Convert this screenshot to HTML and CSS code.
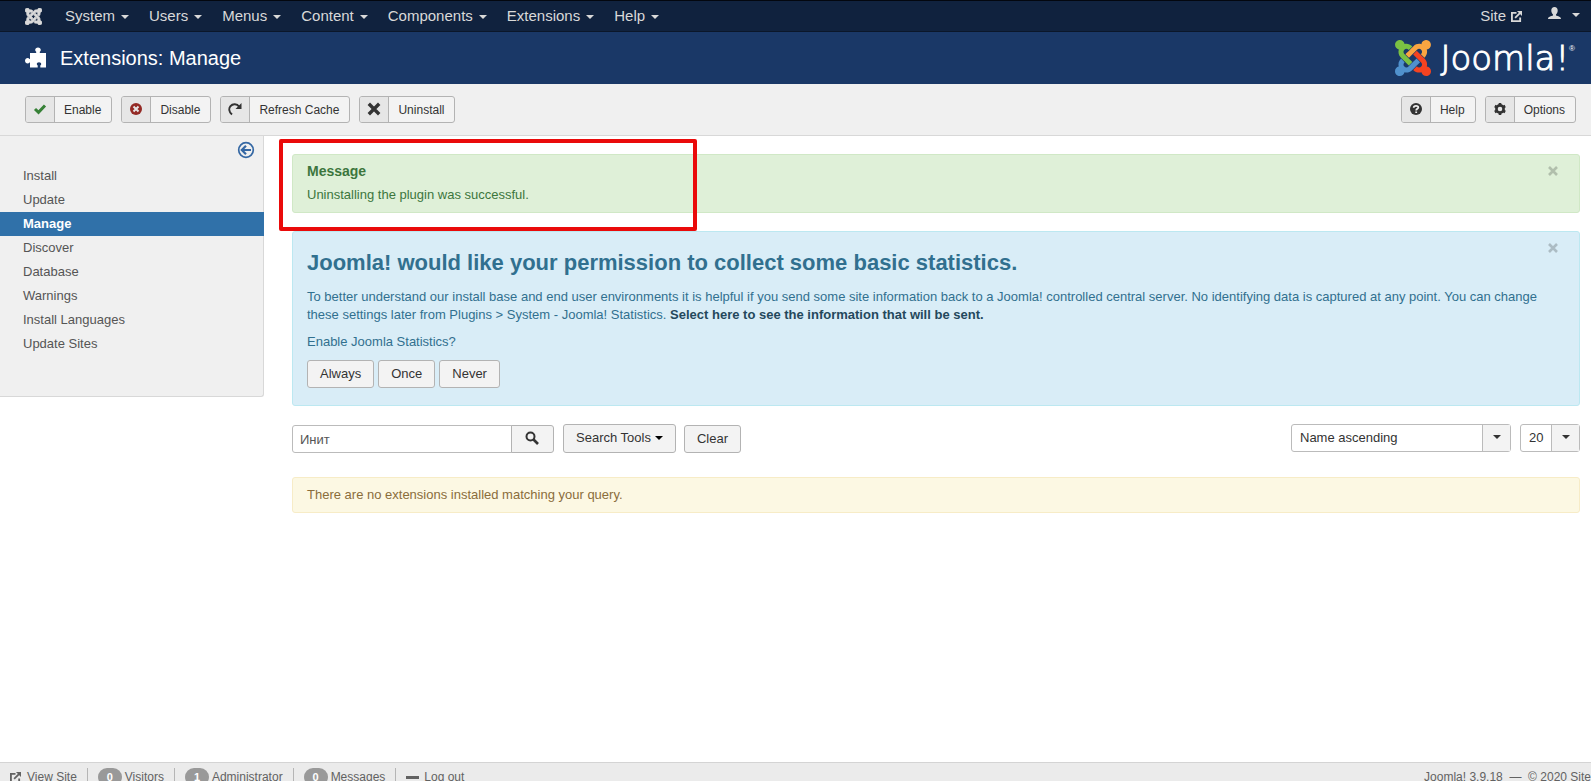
FILE: index.html
```html
<!DOCTYPE html>
<html lang="en">
<head>
    <meta charset="UTF-8">
    <meta name="viewport" content="width=device-width, initial-scale=1.0">
    <title>Extensions: Manage</title>
    <link rel="stylesheet" href="styles.css">
</head>
<body>
    <!-- Top menu -->
    <nav class="navbar">
        <a class="brand" href="#" aria-label="Control Panel">
            <svg width="17" height="17" viewBox="0 32 448 448"><use href="#joomla-mark"/></svg>
        </a>
        <ul class="menu">
            <li><a href="#">System<span class="caret"></span></a></li>
            <li><a href="#">Users<span class="caret"></span></a></li>
            <li><a href="#">Menus<span class="caret"></span></a></li>
            <li><a href="#">Content<span class="caret"></span></a></li>
            <li><a href="#">Components<span class="caret"></span></a></li>
            <li><a href="#">Extensions<span class="caret"></span></a></li>
            <li><a href="#">Help<span class="caret"></span></a></li>
        </ul>
        <ul class="menu menu-right">
            <li><a href="#">Site<svg class="icon-site" width="11" height="11" viewBox="0 0 12 12"><use href="#icon-out"/></svg></a></li>
            <li><a href="#" aria-label="User menu"><svg width="13" height="13" viewBox="0 0 13 13"><path fill="currentColor" d="M6.500 0C8.500 0 9.700 1.400 9.700 3.500C9.700 5.200 9 6.600 8 7.400V8.400C10 9 13 9.600 13 12H0C0 9.600 3 9 5 8.400V7.400C4 6.600 3.300 5.200 3.300 3.500C3.300 1.400 4.500 0 6.500 0Z"/></svg><span class="caret caret-user"></span></a></li>
        </ul>
    </nav>

    <header class="header">
        <h1 class="page-title">
            <svg width="22" height="22" viewBox="0 0 22 22"><path fill="#fff" d="M5 6H11.200V4.800C10.500 4.300 10.200 3.700 10.200 3C10.200 1.400 11.400 .4 13 .4S15.800 1.400 15.800 3C15.800 3.700 15.500 4.300 14.800 4.800V6H21V20.500H15.300V18.500C16 18 16.200 17.500 16.200 17C16.200 15.900 15.300 15.200 14 15.200S11.800 15.900 11.800 17C11.800 17.500 12 18 12.700 18.500V20.500H5V15.500H4.500C4 16.100 3.400 16.400 2.700 16.400C1.200 16.400 0 15.200 0 13.700S1.200 11 2.700 11C3.400 11 4 11.300 4.500 12H5Z"/></svg>
            Extensions: Manage
        </h1>
        <div class="logo">
            <svg width="36" height="36" viewBox="0 32 448 448">
                <defs>
                    <g id="joomla-mark">
                        <path id="mark-tl" d="M.6 92.100C.6 58.800 27.400 32 60.400 32c30 0 54.500 21.900 59.200 50.200 32.600-7.600 67.100.6 96.500 30l-44.300 44.300c-20.500-20.500-42.600-16.300-55.400-3.500-14.300 14.300-14.300 37.900 0 52.200l99.500 99.500-44 44.300c-87.700-87.200-49.700-49.700-99.800-99.700-26.800-26.500-35-64.800-24.800-98.900C20.400 144.600.6 120.700.6 92.100z"/>
                        <path id="mark-tr" d="M130.100 208.500l44.300 44.300c10-10 89.700-89.700 99.700-99.800 14.300-14.300 37.600-14.300 51.900 0 12.800 12.800 17 35-3.500 55.400l44 44.300c31.200-31.200 38.500-67.600 28.900-101.200 29.200-4.100 51.900-29.200 51.900-59.500 0-33.200-26.800-60.100-59.800-60.100-30.300 0-55.400 22.500-59.500 51.600-33.800-9.900-71.700-1.500-98.300 25.100-18.300 19.100-71.100 71.500-99.600 99.900z"/>
                        <path id="mark-br" d="M396.400 360.700c8.200-32.700-.9-68.500-26.300-93.900-11.800-12.200 5 4.700-99.500-99.700l-44.300 44.300 99.700 99.700c14.300 14.300 14.300 37.600 0 51.900-12.800 12.800-35 17-55.400-3.500l-44 44.300c27.600 30.200 68 38.800 102.700 28 5.500 27.400 29.700 48.100 58.900 48.100 33 0 59.800-26.800 59.800-60.100 0-30.200-22.500-55-51.600-59.100z"/>
                        <path id="mark-bl" d="M312.100 307.600l-44-44.300c-87 86.400-50.400 50.400-99.700 99.800-14.300 14.300-37.600 14.300-51.900 0-13.100-13.400-16.900-35.300 3.200-55.400l-44-44.300c-30.200 30.200-38 65.200-29.500 98.300-26.700 6-46.200 29.900-46.200 58.200C0 453.200 26.800 480 59.800 480c28.600 0 52.500-19.800 58.600-46.700 32.700 8.200 68.500-.6 94.200-26 32.100-32 12.200-12.400 99.500-99.700z"/>
                    </g>
                    <g id="icon-out" fill="none" stroke="currentColor">
                        <path stroke-width="2" d="M6 2H1V11H10V7"/>
                        <path stroke-width="2" d="M4.500 7.500L10 2"/>
                        <path fill="currentColor" stroke="none" d="M6.500 0H12V5.500Z"/>
                    </g>
                </defs>
                <use href="#mark-tl" fill="#7ac143"/>
                <use href="#mark-tr" fill="#f9a541"/>
                <use href="#mark-br" fill="#f44321"/>
                <use href="#mark-bl" fill="#5091cd"/>
            </svg>
            <span class="logo-text">Joomla!</span><span class="logo-reg">®</span>
        </div>
    </header>

    <!-- Toolbar -->
    <div class="subhead">
        <button type="button" class="tool">
            <span class="tool-icon"><svg width="14" height="14" viewBox="0 0 14 14"><path fill="none" stroke="#378137" stroke-width="3" d="M2 7L5.500 10.300L12 3.500"/></svg></span>
            <span class="tool-label">Enable</span>
        </button>
        <button type="button" class="tool">
            <span class="tool-icon"><svg width="14" height="14" viewBox="0 0 14 14"><circle cx="7" cy="7" r="6" fill="#942a25"/><path stroke="#e6e6e6" stroke-width="2" d="M4.500 4.500L9.500 9.500M9.500 4.500L4.500 9.500"/></svg></span>
            <span class="tool-label">Disable</span>
        </button>
        <button type="button" class="tool">
            <span class="tool-icon"><svg width="14" height="14" viewBox="0 0 14 14"><path fill="none" stroke="#333" stroke-width="2" d="M4 12.500C1 10 .6 6.500 2.500 4.200C4.800 1.400 9 1.600 11.200 4.800"/><path fill="#333" d="M13.500 1V7H7.500Z"/></svg></span>
            <span class="tool-label">Refresh Cache</span>
        </button>
        <button type="button" class="tool">
            <span class="tool-icon"><svg width="14" height="14" viewBox="0 0 14 14"><path stroke="#333" stroke-width="3.400" d="M1.800 1.800L12.200 12.200M12.200 1.800L1.800 12.200"/></svg></span>
            <span class="tool-label">Uninstall</span>
        </button>
        <button type="button" class="tool tool-right">
            <span class="tool-icon"><svg width="14" height="14" viewBox="0 0 14 14"><circle cx="7" cy="7" r="6" fill="#333"/><path fill="none" stroke="#eee" stroke-width="1.800" d="M4.700 5.700C4.800 3.400 9.300 3.400 9.300 5.500C9.300 6.900 7.200 6.800 7.200 8.500M7.200 9.400V11"/></svg></span>
            <span class="tool-label">Help</span>
        </button>
        <button type="button" class="tool">
            <span class="tool-icon"><svg width="14" height="14" viewBox="0 0 14 14"><circle cx="7" cy="7" r="3.600" fill="none" stroke="#333" stroke-width="2.600"/><path fill="none" stroke="#333" stroke-width="2.600" d="M7 1V3M7 11V13M1.800 4L3.600 5M10.400 9L12.200 10M1.800 10L3.600 9M10.400 5L12.200 4"/></svg></span>
            <span class="tool-label">Options</span>
        </button>
    </div>

    <div class="container">
        <aside class="sidebar">
            <button type="button" class="sidebar-toggle" aria-label="Hide the sidebar">
                <svg width="18" height="18" viewBox="0 0 18 18"><circle cx="9" cy="9" r="7.300" fill="none" stroke="#3568a4" stroke-width="1.700"/><path fill="none" stroke="#3568a4" stroke-width="2.200" d="M14 9H5.500M9 4.800L4.800 9L9 13.200"/></svg>
            </button>
            <ul class="submenu">
                <li><a href="#">Install</a></li>
                <li><a href="#">Update</a></li>
                <li class="active"><a href="#">Manage</a></li>
                <li><a href="#">Discover</a></li>
                <li><a href="#">Database</a></li>
                <li><a href="#">Warnings</a></li>
                <li><a href="#">Install Languages</a></li>
                <li><a href="#">Update Sites</a></li>
            </ul>
        </aside>

        <main class="content">
            <div class="alert alert-success">
                <button type="button" class="close" aria-label="Close"><svg width="10" height="10" viewBox="0 0 10 10"><use href="#icon-close"/></svg></button>
                <h4>Message</h4>
                <p>Uninstalling the plugin was successful.</p>
                <div class="highlight"></div>
            </div>

            <div class="alert alert-info">
                <button type="button" class="close" aria-label="Close"><svg width="10" height="10" viewBox="0 0 10 10"><path id="icon-close" stroke="#000" stroke-width="2.600" d="M1 1L9 9M9 1L1 9"/></svg></button>
                <h2>Joomla! would like your permission to collect some basic statistics.</h2>
                <p>To better understand our install base and end user environments it is helpful if you send some site information back to a Joomla! controlled central server. No identifying data is captured at any point. You can change these settings later from Plugins &gt; System - Joomla! Statistics. <a href="#">Select here to see the information that will be sent.</a></p>
                <p>Enable Joomla Statistics?</p>
                <div class="stats-buttons">
                    <button type="button" class="btn">Always</button>
                    <button type="button" class="btn">Once</button>
                    <button type="button" class="btn">Never</button>
                </div>
            </div>

            <form class="filters">
                <div class="search">
                    <input type="text" name="search" value="Инит" aria-label="Search">
                    <button type="button" class="btn" aria-label="Search"><svg width="14" height="14" viewBox="0 0 14 14"><circle cx="5.500" cy="5.500" r="4" fill="none" stroke="#333" stroke-width="2"/><path stroke="#333" stroke-width="2.600" d="M8.500 8.500L13 13"/></svg></button>
                </div>
                <button type="button" class="btn btn-tools">Search Tools<span class="caret"></span></button>
                <button type="button" class="btn btn-clear">Clear</button>
                <div class="select select-order">
                    <select name="order" aria-label="Sort by">
                        <option>Name ascending</option>
                        <option>Name descending</option>
                    </select>
                    <span class="select-arrow"><span class="caret"></span></span>
                </div>
                <div class="select select-limit">
                    <select name="limit" aria-label="List limit">
                        <option>20</option>
                        <option>50</option>
                    </select>
                    <span class="select-arrow"><span class="caret"></span></span>
                </div>
            </form>

            <div class="alert alert-warning">There are no extensions installed matching your query.</div>
        </main>
    </div>

    <!-- Status bar -->
    <footer class="status">
        <a href="#"><svg width="11" height="11" viewBox="0 0 12 12"><use href="#icon-out"/></svg>View Site</a>
        <span class="item"><span class="badge">0</span>Visitors</span>
        <span class="item"><span class="badge">1</span>Administrator</span>
        <span class="item"><span class="badge">0</span>Messages</span>
        <a class="item" href="#"><span class="dash"></span>Log out</a>
        <span class="version">Joomla! 3.9.18 &nbsp;—&nbsp; © 2020 Site</span>
    </footer>
</body>
</html>
```
FILE: styles.css
```css
* {
    box-sizing: border-box;
}
body {
    display: flex;
    flex-direction: column;
    min-height: 100vh;
    margin: 0;
    background-color: #fff;
    color: #333;
    font-family: "Liberation Sans", Arial, sans-serif;
    font-size: 13px;
    line-height: 18px;
}
a {
    color: inherit;
    text-decoration: none;
}
button, input, select {
    font-family: inherit;
    font-size: 13px;
    line-height: 18px;
    color: #333;
}
button {
    cursor: pointer;
}
ul {
    list-style: none;
    margin: 0;
    padding: 0;
}
svg {
    display: block;
}
.caret {
    display: inline-block;
    border-top: 4px solid;
    border-left: 4px solid transparent;
    border-right: 4px solid transparent;
}

/* Top menu */
.navbar {
    display: flex;
    align-items: center;
    height: 32px;
    padding: 0 11px 0 25px;
    background: #10223e;
    border-top: 1px solid #03070f;
    border-bottom: 1px solid #0b172a;
    color: #d9d9d9;
    font-size: 15px;
}
.brand {
    margin-right: 13px;
    fill: #d9d9d9;
    stroke: #d9d9d9;
    stroke-width: 20px;
}
.menu {
    display: flex;
}
.menu a {
    display: flex;
    align-items: center;
    padding: 0 10px;
}
.menu .caret {
    margin: 2px 0 0 6px;
}
.menu-right {
    margin-left: auto;
}
.menu-right a {
    padding-right: 0;
}
.menu-right li + li a {
    padding-left: 26px;
}
.icon-site {
    margin-left: 5px;
}
.menu .caret-user {
    margin-left: 11px;
}

/* Title bar */
.header {
    display: flex;
    align-items: center;
    justify-content: space-between;
    height: 52px;
    padding: 0 16px 0 25px;
    background: #1a3867;
}
.page-title {
    display: flex;
    align-items: center;
    gap: 13px;
    margin: 0;
    color: #fff;
    font-size: 20px;
    font-weight: normal;
    line-height: 36px;
}
.logo {
    display: flex;
    align-items: center;
    color: #fff;
}
.logo-text {
    margin-left: 9px;
    font-family: "DejaVu Sans", sans-serif;
    font-size: 34px;
    font-weight: 200;
    line-height: 36px;
    -webkit-text-stroke: 1px #fff;
}
.logo-reg {
    align-self: flex-start;
    font-size: 8px;
}

/* Toolbar */
.subhead {
    display: flex;
    gap: 9px;
    padding: 12px 15px 12px 25px;
    background: #f0f0f0;
    border-bottom: 1px solid #d8d8d8;
}
.tool {
    display: flex;
    height: 27px;
    padding: 0;
    overflow: hidden;
    background: #f3f3f3;
    border: 1px solid #b3b3b3;
    border-radius: 3px;
    font-size: 12px;
}
.tool-icon {
    display: flex;
    align-items: center;
    justify-content: center;
    width: 29px;
    height: 25px;
    padding-bottom: 2px;
    background: #e6e6e6;
    border-right: 1px solid #b3b3b3;
}
.tool-label {
    padding: 0 10px 0 9px;
    line-height: 27px;
}
.tool-right {
    margin-left: auto;
}

/* Page body */
.container {
    display: flex;
    align-items: flex-start;
    flex: 1;
}
.sidebar {
    flex: none;
    width: 264px;
    padding: 5px 0 40px;
    background: #f0f0f0;
    border: solid #d8d8d8;
    border-width: 0 1px 1px 0;
    border-radius: 0 0 3px 0;
}
.sidebar-toggle {
    display: block;
    margin: 0 8px 5px auto;
    padding: 0;
    background: none;
    border: none;
}
.submenu a {
    display: block;
    padding: 3px 23px;
    color: #555;
}
.submenu .active a {
    margin-right: -1px;
    background: #3071a9;
    color: #fff;
    font-weight: bold;
}
.content {
    flex: 1;
    padding: 18px 11px 18px 28px;
}
.alert {
    position: relative;
    margin-bottom: 18px;
    padding: 8px 35px 8px 14px;
    border: 1px solid;
    border-radius: 3px;
}
.alert h2, .alert h4, .alert p {
    margin: 0;
}
.alert-success {
    padding-top: 7px;
    background: #dff0d8;
    border-color: #d0e8c6;
    color: #3c763d;
}
.alert-success h4 {
    margin-bottom: 6px;
    font-size: 14px;
    line-height: 18px;
}
.alert-info {
    padding-bottom: 17px;
    background: #d9edf7;
    border-color: #bce8f1;
    color: #31708f;
}
.alert-info h2 {
    margin: 5px 0 7px;
    font-size: 22px;
    line-height: 36px;
}
.alert-info p {
    margin-bottom: 9px;
}
.alert-info p a {
    color: #24485c;
    font-weight: bold;
}
.alert-warning {
    background: #fcf8e3;
    border-color: #f7ecc7;
    color: #8a6d3b;
}
.close {
    position: absolute;
    top: 11px;
    right: 21px;
    padding: 0;
    background: none;
    border: none;
    opacity: 0.2;
}
/* Frame drawn over the message */
.highlight {
    position: absolute;
    top: -16px;
    left: -14px;
    z-index: 1;
    width: 418px;
    height: 92px;
    border: 4px solid #ea0a0a;
    border-radius: 2px;
    pointer-events: none;
}
.btn {
    height: 28px;
    padding: 0 12px;
    background: #f3f3f3;
    border: 1px solid #b3b3b3;
    border-radius: 3px;
}
.stats-buttons {
    display: flex;
    gap: 4px;
}

/* Filters */
.filters {
    display: flex;
    align-items: flex-end;
    margin-bottom: 24px;
}
.search {
    display: flex;
}
.search input {
    width: 220px;
    height: 28px;
    padding: 0 7px;
    border: 1px solid #bbb;
    border-radius: 3px 0 0 3px;
    color: #555;
}
.search .btn {
    width: 43px;
    margin-left: -1px;
    padding: 0 13px 2px;
    border-radius: 0 3px 3px 0;
}
.btn-tools {
    height: 29px;
    margin: 0 8px 0 9px;
    padding-bottom: 2px;
}
.btn-tools .caret {
    margin-left: 4px;
    vertical-align: middle;
    border-top-color: #000;
}
.select {
    position: relative;
    align-self: flex-start;
    height: 28px;
    margin-left: 9px;
}
.select select {
    width: 100%;
    height: 28px;
    padding: 0 8px;
    appearance: none;
    background: #fff;
    border: 1px solid #bbb;
    border-radius: 3px;
}
.select-order {
    width: 220px;
    margin-left: auto;
}
.select-limit {
    width: 60px;
}
.select-arrow {
    position: absolute;
    top: 1px;
    right: 1px;
    display: flex;
    align-items: center;
    justify-content: center;
    width: 28px;
    height: 26px;
    padding-bottom: 2px;
    background: #f3f3f3;
    border-left: 1px solid #bbb;
    pointer-events: none;
}

/* Status bar */
.status {
    display: flex;
    height: 19px;
    padding: 5px 0 0 10px;
    overflow: hidden;
    background: #ebebeb;
    border-top: 1px solid #d4d4d4;
    color: #626262;
    font-size: 12px;
    white-space: nowrap;
}
.status a, .status .item {
    display: flex;
    align-items: center;
    gap: 6px;
    height: 18px;
}
.status .item {
    gap: 3px;
    margin-left: 10px;
    padding-left: 10px;
    border-left: 1px solid #b5b5b5;
}
.badge {
    width: 24px;
    height: 18px;
    border-radius: 9px;
    background: #999;
    color: #fff;
    font-size: 11px;
    font-weight: bold;
    text-align: center;
}
.dash {
    width: 13px;
    height: 3px;
    margin-right: 2px;
    background: #626262;
}
.version {
    margin-left: auto;
}
```
